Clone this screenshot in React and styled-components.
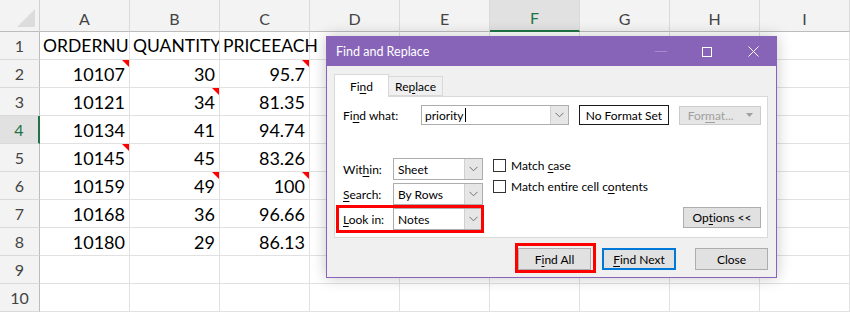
import React from 'react';
import styled, { createGlobalStyle, css } from 'styled-components';

const GlobalStyle = createGlobalStyle`
  html, body { margin: 0; padding: 0; background: #fff; }
  body { width: 850px; height: 312px; overflow: hidden; }
`;

// Sheet
const Sheet = styled.div`
  position: relative;
  display: grid;
  grid-template-columns: 40px repeat(9, 90px);
  grid-template-rows: 32px repeat(10, 28px);
  width: 850px;
  height: 312px;
  overflow: hidden;
  font-family: Lato, "Open Sans", sans-serif;
`;

const Corner = styled.div`
  position: relative;
  background: #f3f3f3;
  border-right: 1px solid #d0d0d0;
  border-bottom: 1px solid #bdbdbd;
  &::after {
    content: '';
    position: absolute;
    right: 4px;
    bottom: 4px;
    border-style: solid;
    border-width: 0 0 18px 18px;
    border-color: transparent transparent #dcdcdc transparent;
  }
`;

const ColHead = styled.div`
  display: flex;
  align-items: center;
  justify-content: center;
  padding-top: 5px;
  background: ${p => (p.$active ? '#e1e1e1' : '#f3f3f3')};
  border-right: 1px solid #dadada;
  border-bottom: ${p => (p.$active ? '2px solid #217346' : '1px solid #bdbdbd')};
  color: ${p => (p.$active ? '#217346' : '#444')};
  font-size: 16px;
`;

const RowHead = styled.div`
  display: flex;
  align-items: center;
  justify-content: center;
  background: ${p => (p.$active ? '#e1e1e1' : '#f3f3f3')};
  border-bottom: 1px solid #dadada;
  border-right: ${p => (p.$active ? '2px solid #217346' : '1px solid #bdbdbd')};
  color: ${p => (p.$active ? '#217346' : '#444')};
  font-size: 16px;
`;

const Cell = styled.div`
  position: relative;
  display: flex;
  align-items: center;
  justify-content: ${p => (p.$text ? 'flex-start' : 'flex-end')};
  padding: 0 4px 0 3px;
  border-right: 1px solid #e1e1e1;
  border-bottom: 1px solid #e1e1e1;
  overflow: ${p => (p.$spill ? 'visible' : 'hidden')};
  white-space: nowrap;
  font-size: ${p => (p.$text ? 17.5 : 18)}px;
  color: #000;
  ${p =>
    p.$note &&
    css`
      &::after {
        content: '';
        position: absolute;
        top: 0;
        right: 0;
        border-style: solid;
        border-width: 0 7px 7px 0;
        border-color: transparent #ff0000 transparent transparent;
      }
    `}
`;

// Dialog
const Dialog = styled.div`
  position: absolute;
  left: 326px;
  top: 36px;
  width: 451px;
  height: 242px;
  box-sizing: border-box;
  border: 1px solid #8764b8;
  background: #f0f0f0;
  box-shadow: 0 0 14px rgba(0, 0, 0, 0.22);
  display: flex;
  flex-direction: column;
  font-family: Lato, "Open Sans", sans-serif;
  font-size: 12px;
  color: #000;
`;

const TitleBar = styled.div`
  height: 29px;
  display: flex;
  align-items: center;
  background: #8764b8;
  color: #fff;
  padding-left: 9px;
`;

const Title = styled.div`
  flex: 1;
  font-size: 12.5px;
`;

const WinBtn = styled.div`
  width: 46px;
  height: 29px;
  display: flex;
  align-items: center;
  justify-content: center;
`;

const Body = styled.div`
  padding: 8px 8px 0 7px;
  display: flex;
  flex-direction: column;
`;

const Tabs = styled.div`
  display: flex;
  align-items: flex-end;
  position: relative;
  z-index: 1;
  margin-bottom: -1px;
`;

const Tab = styled.div`
  display: flex;
  align-items: center;
  justify-content: center;
  box-sizing: border-box;
  border: 1px solid #d9d9d9;
  ${p =>
    p.$active
      ? css`
          width: 55px;
          height: 23px;
          background: #fff;
          border-bottom: none;
        `
      : css`
          width: 54px;
          height: 20px;
          background: #f0f0f0;
          border-left: none;
          margin-bottom: 1px;
        `}
`;

const Panel = styled.div`
  box-sizing: border-box;
  height: 142px;
  background: #fff;
  border: 1px solid #d9d9d9;
  padding: 8px 6px 7px 8px;
  display: flex;
  flex-direction: column;
`;

const FindRow = styled.div`
  display: flex;
  align-items: center;
`;

const Label = styled.div`
  width: ${p => p.$w}px;
  flex-shrink: 0;
`;

const Key = styled.span`
  text-decoration: underline;
  text-underline-offset: 2px;
`;

const Combo = styled.div`
  position: relative;
  box-sizing: border-box;
  width: ${p => p.$w}px;
  height: ${p => p.$h}px;
  display: flex;
  align-items: center;
  background: #fff;
  border: 1px solid #adadad;
  padding-left: ${p => p.$pad || 3}px;
`;

const ComboText = styled.div`
  flex: 1;
  display: flex;
  align-items: center;
`;

const Caret = styled.span`
  display: inline-block;
  width: 1px;
  height: 14px;
  background: #000;
  margin-left: 1px;
`;

const ArrowBox = styled.div`
  width: 17px;
  align-self: stretch;
  display: flex;
  align-items: center;
  justify-content: center;
  background: #e6e6e6;
  border-left: 1px solid #d0d0d0;
`;

const FormatBox = styled.div`
  box-sizing: border-box;
  width: 91px;
  height: 20px;
  margin-left: 10px;
  display: flex;
  align-items: center;
  justify-content: center;
  border: 1px solid #1a1a1a;
`;

const Button = styled.div`
  box-sizing: border-box;
  position: relative;
  width: ${p => p.$w}px;
  height: ${p => p.$h || 22}px;
  margin-left: ${p => p.$ml || 0}px;
  display: flex;
  align-items: center;
  justify-content: center;
  background: #e1e1e1;
  border: ${p => (p.$focus ? '2px solid #0078d7' : '1px solid #adadad')};
  color: ${p => (p.$disabled ? '#a0a0a0' : '#000')};
  ${p => p.$disabled && css`background: #e6e6e6; border-color: #cccccc;`}
`;

const OptionsButton = styled(Button)`
  margin-left: auto;
  align-self: flex-end;
  margin-bottom: 2px;
`;

const Options = styled.div`
  display: flex;
  margin-top: 33px;
  flex: 1;
`;

const SelectCol = styled.div`
  display: flex;
  flex-direction: column;
  gap: 3px;
`;

const SelectRow = styled.div`
  position: relative;
  display: flex;
  align-items: center;
`;

const Highlight = styled.div`
  position: absolute;
  left: ${p => p.$l}px;
  top: ${p => p.$t}px;
  right: ${p => p.$r}px;
  bottom: ${p => p.$b}px;
  border: 3px solid #ff0000;
  pointer-events: none;
`;

const CheckCol = styled.div`
  display: flex;
  flex-direction: column;
  gap: 6px;
  margin-left: 10px;
`;

const CheckRow = styled.div`
  display: flex;
  align-items: center;
  gap: 5px;
`;

const Box = styled.div`
  box-sizing: border-box;
  width: 13px;
  height: 13px;
  background: #fff;
  border: 1px solid #333;
`;

const Footer = styled.div`
  display: flex;
  justify-content: flex-end;
  padding-top: 10px;
`;

const DropTri = styled.svg`
  margin-left: 12px;
`;

const Chevron = ({ color = '#707070' }) => (
  <svg width="9" height="6" viewBox="0 0 9 6">
    <path d="M0.5 0.8 L4.5 4.8 L8.5 0.8" fill="none" stroke={color} strokeWidth="1" />
  </svg>
);

const Select = ({ value, w = 90, h = 22 }) => (
  <Combo $w={w} $h={h} $pad={4}>
    <ComboText>{value}</ComboText>
    <ArrowBox>
      <Chevron />
    </ArrowBox>
  </Combo>
);

const cols = ['A', 'B', 'C', 'D', 'E', 'F', 'G', 'H', 'I'];

const rows = [
  [{ v: 'ORDERNU', t: true }, { v: 'QUANTITY', t: true }, { v: 'PRICEEACH', t: true, s: true }],
  [{ v: '10107', n: true }, { v: '30' }, { v: '95.7', n: true }],
  [{ v: '10121' }, { v: '34', n: true }, { v: '81.35' }],
  [{ v: '10134' }, { v: '41' }, { v: '94.74' }],
  [{ v: '10145', n: true }, { v: '45' }, { v: '83.26' }],
  [{ v: '10159' }, { v: '49', n: true }, { v: '100', n: true }],
  [{ v: '10168' }, { v: '36' }, { v: '96.66' }],
  [{ v: '10180' }, { v: '29' }, { v: '86.13' }],
  [],
  [],
];

export default function App() {
  return (
    <>
      <GlobalStyle />
      <Sheet>
        <Corner />
        {cols.map(c => (
          <ColHead key={c} $active={c === 'F'}>
            {c}
          </ColHead>
        ))}
        {rows.map((r, i) => (
          <React.Fragment key={i}>
            <RowHead $active={i === 3}>{i + 1}</RowHead>
            {cols.map((c, j) => {
              const cell = r[j];
              return (
                <Cell key={c} $text={cell && cell.t} $note={cell && cell.n} $spill={cell && cell.s}>
                  {cell ? cell.v : ''}
                </Cell>
              );
            })}
          </React.Fragment>
        ))}

        <Dialog>
          <TitleBar>
            <Title>Find and Replace</Title>
            <WinBtn>
              <svg width="12" height="2" viewBox="0 0 12 2">
                <rect x="0" y="0" width="12" height="1" fill="#a68bd0" />
              </svg>
            </WinBtn>
            <WinBtn>
              <svg width="10" height="10" viewBox="0 0 10 10">
                <rect x="0.5" y="0.5" width="9" height="9" fill="none" stroke="#fff" strokeWidth="1" />
              </svg>
            </WinBtn>
            <WinBtn>
              <svg width="11" height="11" viewBox="0 0 11 11">
                <path d="M0.5 0.5 L10.5 10.5 M10.5 0.5 L0.5 10.5" stroke="#fff" strokeWidth="1" />
              </svg>
            </WinBtn>
          </TitleBar>

          <Body>
            <Tabs>
              <Tab $active>
                Fi<Key>n</Key>d
              </Tab>
              <Tab>
                Re<Key>p</Key>lace
              </Tab>
            </Tabs>
            <Panel>
              <FindRow>
                <Label $w={78}>
                  Fi<Key>n</Key>d what:
                </Label>
                <Combo $w={148} $h={20}>
                  <ComboText>
                    priority
                    <Caret />
                  </ComboText>
                  <ArrowBox>
                    <Chevron />
                  </ArrowBox>
                </Combo>
                <FormatBox>No Format Set</FormatBox>
                <Button $w={82} $h={19} $ml={10} $disabled>
                  For<Key>m</Key>at...
                  <DropTri width="7" height="4" viewBox="0 0 7 4">
                    <path d="M0 0 L7 0 L3.5 4 Z" fill="#a0a0a0" />
                  </DropTri>
                </Button>
              </FindRow>

              <Options>
                <SelectCol>
                  <SelectRow>
                    <Label $w={50}>
                      Wit<Key>h</Key>in:
                    </Label>
                    <Select value="Sheet" />
                  </SelectRow>
                  <SelectRow>
                    <Label $w={50}>
                      <Key>S</Key>earch:
                    </Label>
                    <Select value="By Rows" />
                  </SelectRow>
                  <SelectRow>
                    <Label $w={50}>
                      <Key>L</Key>ook in:
                    </Label>
                    <Select value="Notes" />
                    <Highlight $l={-7} $t={-3} $r={-1} $b={-3} />
                  </SelectRow>
                </SelectCol>
                <CheckCol>
                  <CheckRow>
                    <Box />
                    <span>
                      Match <Key>c</Key>ase
                    </span>
                  </CheckRow>
                  <CheckRow>
                    <Box />
                    <span>
                      Match entire cell c<Key>o</Key>ntents
                    </span>
                  </CheckRow>
                </CheckCol>
                <OptionsButton $w={78} $h={21}>
                  Op<Key>t</Key>ions &lt;&lt;
                </OptionsButton>
              </Options>
            </Panel>

            <Footer>
              <Button $w={73}>
                F<Key>i</Key>nd All
                <Highlight $l={-4} $t={-6} $r={-6} $b={-4} />
              </Button>
              <Button $w={74} $ml={11} $focus>
                <Key>F</Key>ind Next
              </Button>
              <Button $w={73} $ml={19}>
                Close
              </Button>
            </Footer>
          </Body>
        </Dialog>
      </Sheet>
    </>
  );
}
